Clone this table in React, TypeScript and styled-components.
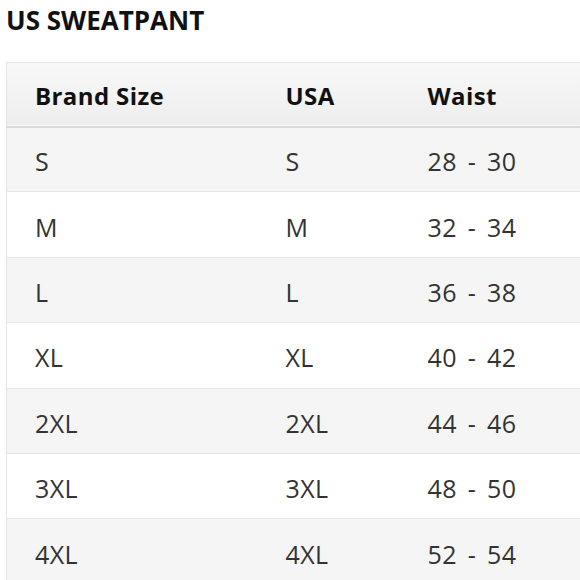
import React from 'react';
import styled, { createGlobalStyle } from 'styled-components';

const GlobalStyle = createGlobalStyle`
  html, body {
    margin: 0;
    padding: 0;
    background: #ffffff;
    overflow: hidden;
  }
  body {
    font-family: "Open Sans", "Liberation Sans", sans-serif;
  }
`;

export const Page = styled.div`
  width: 580px;
  height: 580px;
  overflow: hidden;
  padding: 4px 0 0 6px;
  box-sizing: border-box;
`;

export const Title = styled.h2`
  margin: 0;
  font-size: 26px;
  font-weight: 700;
  color: #111111;
  line-height: 32px;
`;

export const Table = styled.table`
  margin-top: 26px;
  width: 600px;
  table-layout: fixed;
  border-collapse: collapse;
  border-left: 1px solid #e3e3e3;
  border-top: 1px solid #e3e3e3;
  font-size: 25px;
`;

export const HeadRow = styled.tr`
  background: linear-gradient(#f8f8f8, #eeeeee);
  border-bottom: 2px solid #dadada;
`;

export const HeadCell = styled.th<{ $w: number }>`
  box-sizing: border-box;
  width: ${(p) => p.$w}px;
  height: 64px;
  padding: 3px 0 0 28px;
  text-align: left;
  font-size: 24px;
  font-weight: 700;
  letter-spacing: 0.4px;
  color: #111111;
`;

export const Row = styled.tr<{ $shade: boolean }>`
  background: ${(p) => (p.$shade ? '#f5f5f5' : '#ffffff')};
  border-bottom: 1px solid #e6e6e6;
`;

export const Cell = styled.td`
  box-sizing: border-box;
  height: 65.4px;
  padding: 4px 0 0 28px;
  color: #333333;
  word-spacing: 4px;
  letter-spacing: 0.4px;
`;

const rows = [
  ['S', 'S', '28 - 30'],
  ['M', 'M', '32 - 34'],
  ['L', 'L', '36 - 38'],
  ['XL', 'XL', '40 - 42'],
  ['2XL', '2XL', '44 - 46'],
  ['3XL', '3XL', '48 - 50'],
  ['4XL', '4XL', '52 - 54'],
];

const App = () => {
  return (
    <>
      <GlobalStyle />
      <Page>
        <Title>US SWEATPANT</Title>
        <Table>
          <thead>
            <HeadRow>
              <HeadCell $w={251}>Brand Size</HeadCell>
              <HeadCell $w={142}>USA</HeadCell>
              <HeadCell $w={207}>Waist</HeadCell>
            </HeadRow>
          </thead>
          <tbody>
            {rows.map((r, i) => (
              <Row key={r[0]} $shade={i % 2 === 0}>
                <Cell>{r[0]}</Cell>
                <Cell>{r[1]}</Cell>
                <Cell>{r[2]}</Cell>
              </Row>
            ))}
          </tbody>
        </Table>
      </Page>
    </>
  );
};

export default App;
